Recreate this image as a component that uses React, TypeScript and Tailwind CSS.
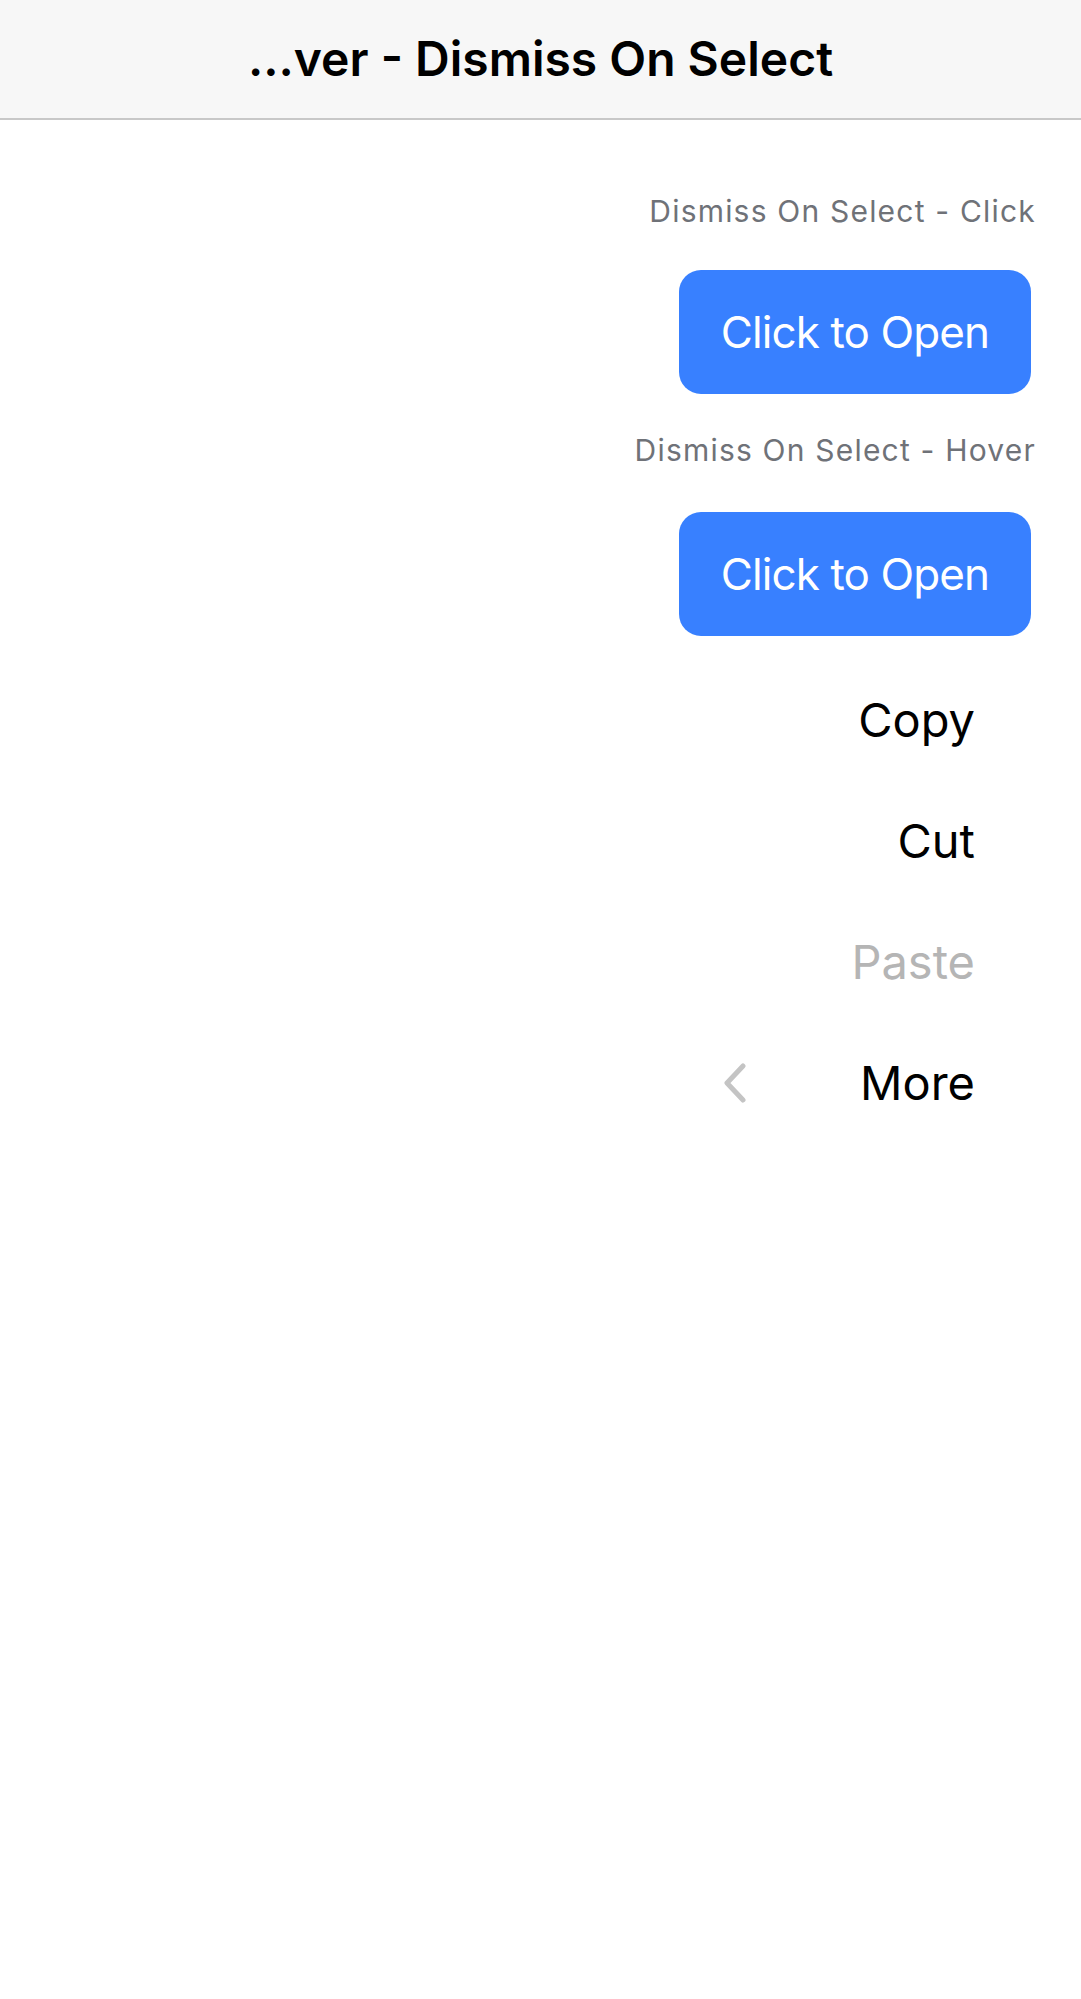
import React from 'react';

const font = { fontFamily: 'Inter, "Noto Sans", sans-serif' };

const Chevron: React.FC = () => (
  <svg width="24" height="40" viewBox="0 0 24 40" fill="none">
    <polyline points="20,3 4,20 20,37" stroke="#c4c4c4" strokeWidth="5" strokeLinecap="round" strokeLinejoin="round" />
  </svg>
);

const Section: React.FC<{ label: string; first?: boolean }> = ({ label, first }) => (
  <div className={`flex flex-col items-end ${first ? 'mt-[73px]' : 'mt-[38px]'}`}>
    <div className="h-[36px] pr-[45px] text-[30px] leading-[36px] tracking-[1.2px] text-[#6f7278] whitespace-nowrap">{label}</div>
    <button className={`${first ? 'mt-[41px]' : 'mt-[44px]'} mr-[50px] flex h-[124px] w-[352px] items-center justify-center rounded-[22px] bg-[#3880ff] text-[44px] tracking-[-0.9px] text-white`}>
      Click to Open
    </button>
  </div>
);

const items = [
  { label: 'Copy', muted: false },
  { label: 'Cut', muted: false },
  { label: 'Paste', muted: true },
  { label: 'More', muted: false, more: true },
];

export default function App() {
  return (
    <div className="min-h-[1999px] bg-white" style={font}>
      <header className="flex h-[120px] items-center justify-center border-b-2 border-[#c8c8c8] bg-[#f7f7f7]">
        <h1 className="text-[48px] font-semibold leading-[58px] text-black whitespace-nowrap">...ver - Dismiss On Select</h1>
      </header>
      <main className="flex flex-col">
        <Section label="Dismiss On Select - Click" first />
        <Section label="Dismiss On Select - Hover" />
        <div className="mt-[23px] mr-[50px] flex w-[352px] flex-col self-end">
          {items.map((it) => (
            <div key={it.label} className="flex h-[121px] items-center justify-between pl-[44px] pr-[56px]">
              <span>{it.more ? <Chevron /> : null}</span>
              <span className={`text-[47px] leading-[121px] ${it.muted ? 'text-[#b5b5b5]' : 'text-black'}`}>{it.label}</span>
            </div>
          ))}
        </div>
      </main>
    </div>
  );
}
